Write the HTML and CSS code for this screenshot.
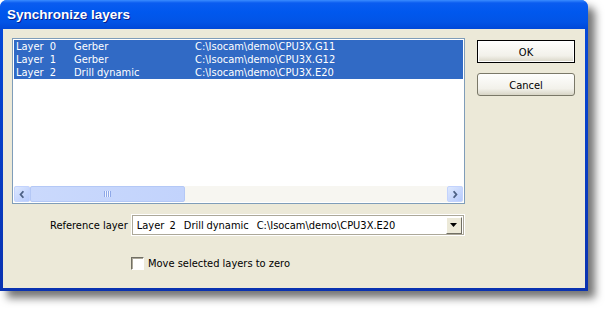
FILE: index.html
```html
<!DOCTYPE html>
<html>
<head>
<meta charset="utf-8">
<link rel="stylesheet" href="styles.css">
</head>
<body>
<div class="window">
  <div class="titlebar">Synchronize layers</div>
  <div class="client">
    <div class="top">
      <div class="listbox">
        <div class="rows">
          <div class="row sel"><span class="c1">Layer&nbsp;&nbsp;0</span><span class="c2">Gerber</span><span class="c3">C:\Isocam\demo\CPU3X.G11</span></div>
          <div class="row sel"><span class="c1">Layer&nbsp;&nbsp;1</span><span class="c2">Gerber</span><span class="c3">C:\Isocam\demo\CPU3X.G12</span></div>
          <div class="row sel"><span class="c1">Layer&nbsp;&nbsp;2</span><span class="c2">Drill dynamic</span><span class="c3">C:\Isocam\demo\CPU3X.E20</span></div>
        </div>
        <div class="hscroll">
          <div class="sbtn"><svg width="15" height="15" viewBox="0 0 15 15"><path d="M9 4 L6 7.5 L9 11" fill="none" stroke="#4d6185" stroke-width="2"/></svg></div>
          <div class="thumb"><span class="grip"></span></div>
          <div class="track"></div>
          <div class="sbtn"><svg width="15" height="15" viewBox="0 0 15 15"><path d="M6 4 L9 7.5 L6 11" fill="none" stroke="#4d6185" stroke-width="2"/></svg></div>
        </div>
      </div>
      <div class="buttons">
        <div class="btn def">OK</div>
        <div class="btn">Cancel</div>
      </div>
    </div>
    <div class="refrow">
      <span class="reflabel">Reference layer</span>
      <div class="combo">
        <span class="ctext">Layer&nbsp;&nbsp;2&nbsp;&nbsp;&nbsp;Drill dynamic&nbsp;&nbsp;&nbsp;C:\Isocam\demo\CPU3X.E20</span>
        <div class="cbtn"><svg width="7" height="4" viewBox="0 0 7 4"><path d="M0 0 H7 L3.5 4 Z" fill="#000"/></svg></div>
      </div>
    </div>
    <div class="checkrow">
      <span class="checkbox"></span>
      <span>Move selected layers to zero</span>
    </div>
  </div>
</div>
</body>
</html>
```
FILE: styles.css
```css
html, body {
  margin: 0;
  padding: 0;
  background: #fff;
}
body {
  width: 607px;
  height: 309px;
  overflow: hidden;
  font-family: "DejaVu Sans Condensed", "Liberation Sans", sans-serif;
  font-size: 11px;
  color: #000;
}
.window {
  width: 588px;
  height: 291px;
  box-sizing: border-box;
  border-radius: 7px 7px 0 0;
  box-shadow: 7px 7px 8px rgba(0,0,0,0.55);
  display: flex;
  flex-direction: column;
  padding: 0 3px 3px 3px;
  background: linear-gradient(#0058ee, #0548d8 30px, #0a32b0 100%);
}
.titlebar {
  height: 29px;
  flex: none;
  box-sizing: border-box;
  padding: 7px 0 0 7px;
  color: #fff;
  font-family: "Liberation Sans", sans-serif;
  font-weight: bold;
  font-size: 13.5px;
  text-shadow: 1px 1px 0 #0a1e8a;
  background: linear-gradient(#3a8cff 0px, #0a5cf0 3px, #0058ee 12px, #0254e6 22px, #0048d8 29px);
  margin: 0 -3px;
  border-radius: 7px 7px 0 0;
}
.client {
  flex: 1;
  background: #ece9d8;
  padding: 9px 0 0 9px;
  display: flex;
  flex-direction: column;
}
.top {
  display: flex;
}
.listbox {
  width: 453px;
  height: 166px;
  box-sizing: border-box;
  border: 1px solid #7f9db9;
  background: #fff;
  display: flex;
  flex-direction: column;
  padding: 1px;
}
.rows {
  flex: 1;
}
.row {
  height: 13px;
  line-height: 13px;
  display: flex;
  white-space: nowrap;
}
.row.sel {
  background: #316ac5;
  color: #fff;
}
.c1 { width: 58px; padding-left: 2px; }
.c2 { width: 121px; }
.hscroll {
  height: 16px;
  display: flex;
  background: #f7f6f1;
}
.sbtn {
  width: 16px;
  height: 16px;
  box-sizing: border-box;
  border: 1px solid #c3d3fd;
  border-radius: 2px;
  background: linear-gradient(135deg, #dde8fe, #b6cafc);
  display: flex;
  align-items: center;
  justify-content: center;
}
.thumb {
  width: 155px;
  height: 16px;
  box-sizing: border-box;
  border: 1px solid #b4c8f6;
  border-radius: 2px;
  background: linear-gradient(90deg, #cad9fc, #c2d3fc);
  display: flex;
  align-items: center;
  justify-content: center;
}
.grip {
  width: 7px;
  height: 6px;
  background: repeating-linear-gradient(90deg, #8ea8e8 0 1px, #eef3fe 1px 2px);
}
.track {
  flex: 1;
}
.buttons {
  margin-left: 12px;
  margin-top: 2px;
  display: flex;
  flex-direction: column;
  gap: 10px;
}
.btn {
  width: 98px;
  height: 23px;
  box-sizing: border-box;
  border: 1px solid #7a7868;
  border-radius: 3px;
  background: linear-gradient(#fefefd, #f2f1ea 70%, #d8d5c6);
  display: flex;
  align-items: center;
  justify-content: center;
  padding-top: 1px;
}
.btn.def {
  border: 1px solid #000;
  border-radius: 0;
  box-shadow: inset 0 0 0 1px #fff;
}
.refrow {
  display: flex;
  align-items: center;
  margin-top: 10px;
  margin-left: 38px;
}
.reflabel {
  margin-right: 3px;
}
.combo {
  width: 334px;
  height: 22px;
  box-sizing: border-box;
  border: 1px solid #fff;
  outline: 1px solid #aca899;
  outline-offset: -2px;
  background: #fff;
  display: flex;
  align-items: center;
  padding: 2px;
  box-shadow: inset 1px 1px 0 #716f64;
}
.ctext {
  flex: 1;
  padding-left: 3px;
  white-space: nowrap;
  word-spacing: -0.5px;
}
.cbtn {
  width: 16px;
  height: 17px;
  box-sizing: border-box;
  background: #ece9d8;
  border: 1px solid;
  border-color: #fff #716f64 #716f64 #fff;
  display: flex;
  align-items: center;
  justify-content: center;
}
.checkrow {
  display: flex;
  align-items: center;
  margin-left: 119px;
  margin-top: 21px;
}
.checkbox {
  width: 13px;
  height: 13px;
  box-sizing: border-box;
  border: 1px solid;
  border-color: #716f64 #fff #fff #716f64;
  background: #fff;
  margin-right: 4px;
  box-shadow: inset 1px 1px 0 #aca899;
}
```
